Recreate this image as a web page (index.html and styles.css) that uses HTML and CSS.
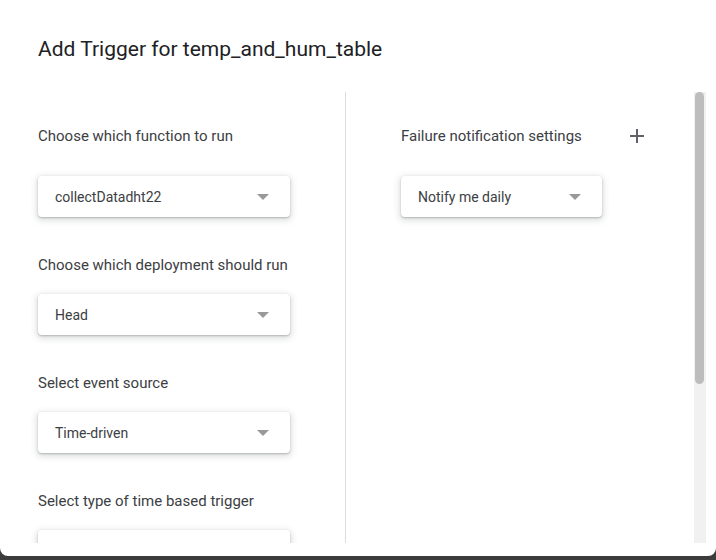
FILE: index.html
```html
<!DOCTYPE html>
<html lang="en">
<head>
<meta charset="utf-8">
<title>Add Trigger</title>
<link rel="stylesheet" href="styles.css">
</head>
<body>
<div class="dialog">
  <h1 class="title">Add Trigger for temp_and_hum_table</h1>
  <div class="content">
    <div class="columns">
      <div class="col col-left">
        <div class="field first">
          <div class="label">Choose which function to run</div>
          <div class="select wide"><span>collectDatadht22</span><i class="arrow"></i></div>
        </div>
        <div class="field">
          <div class="label">Choose which deployment should run</div>
          <div class="select wide"><span>Head</span><i class="arrow"></i></div>
        </div>
        <div class="field">
          <div class="label">Select event source</div>
          <div class="select wide"><span>Time-driven</span><i class="arrow"></i></div>
        </div>
        <div class="field">
          <div class="label">Select type of time based trigger</div>
          <div class="select wide"></div>
        </div>
      </div>
      <div class="col col-right">
        <div class="field first">
          <div class="label-row">
            <div class="label">Failure notification settings</div>
            <svg class="plus" width="14" height="14" viewBox="0 0 14 14"><path d="M7 0v14M0 7h14" stroke="#5f6368" stroke-width="2" fill="none"/></svg>
          </div>
          <div class="select narrow"><span>Notify me daily</span><i class="arrow"></i></div>
        </div>
      </div>
    </div>
    <div class="scrollbar"><div class="thumb"></div></div>
  </div>
</div>
</body>
</html>
```

FILE: styles.css
```css
html, body {
  margin: 0;
  padding: 0;
}
body {
  background: #3c3c3c;
  font-family: Roboto, "Liberation Sans", Arial, sans-serif;
  color: #3c4043;
}
.dialog {
  height: 556px;
  background: #fff;
  border-radius: 0 0 8px 8px;
  overflow: hidden;
}
.title {
  margin: 0;
  padding: 36px 0 0 38px;
  height: 56px;
  box-sizing: border-box;
  font-size: 21px;
  line-height: 26px;
  font-weight: 400;
  color: #202124;
}
.content {
  margin-top: 36px;
  width: 706px;
  height: 451px;
  display: flex;
}
.columns {
  flex: 1;
  display: grid;
  grid-template-columns: 346px 1fr;
  overflow: hidden;
}
.col {
  padding-top: 34px;
}
.col-left {
  padding-left: 38px;
  border-right: 1px solid #dadce0;
}
.col-right {
  padding-left: 55px;
}
.field {
  margin-bottom: 38px;
}
.label {
  font-size: 15px;
  line-height: 20px;
  margin-bottom: 19px;
  color: #3c4043;
}
.first .label {
  margin-bottom: 30px;
}
.label-row {
  display: flex;
  align-items: flex-start;
}
.plus {
  margin-left: 48px;
  margin-top: 3px;
}
.select {
  height: 41px;
  box-sizing: border-box;
  border-radius: 4px;
  background: #fff;
  box-shadow: 0 1px 2px 0 rgba(60,64,67,.3), 0 2px 6px 2px rgba(60,64,67,.15);
  display: flex;
  align-items: center;
  justify-content: space-between;
  padding: 0 21px 0 17px;
  font-size: 14px;
  color: #3c4043;
}
.wide { width: 252px; }
.narrow { width: 201px; }
.arrow {
  width: 0;
  height: 0;
  border-left: 6px solid transparent;
  border-right: 6px solid transparent;
  border-top: 6px solid #999;
}
.scrollbar {
  width: 12px;
  background: #f1f1f1;
  padding: 0 2px 0 1px;
  box-sizing: border-box;
}
.thumb {
  height: 292px;
  background: #bdbdbd;
  border-radius: 5px;
}
```
